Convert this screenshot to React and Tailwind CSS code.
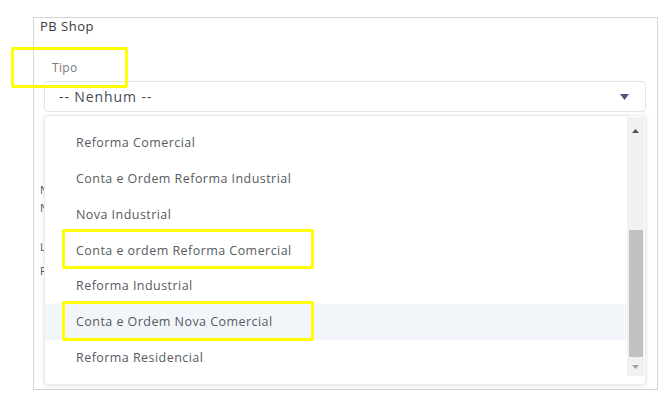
import React from "react";

const options = [
  "Reforma Comercial",
  "Conta e Ordem Reforma Industrial",
  "Nova Industrial",
  "Conta e ordem Reforma Comercial",
  "Reforma Industrial",
  "Conta e Ordem Nova Comercial",
  "Reforma Residencial",
];

const App = () => {
  const active = 5;

  return (
    <div className="relative h-[399px] w-[667px] bg-white pl-[33px] pt-[17px] font-['Open_Sans',sans-serif] overflow-hidden">
      {/* Panel */}
      <div className="relative w-[625px] h-[373px] border border-[#d4d4d4]">
        <div className="pl-[6px] text-[13px] leading-[16px] tracking-[0.5px] text-[#3b3b3b]">PB Shop</div>

        <div className="mt-[26px] pl-[18px] text-[12px] leading-[16px] tracking-[0.3px] text-[#7a7a7a]">Tipo</div>

        {/* Select */}
        <div className="mt-[5px] ml-[10px] w-[602px] h-[31px] border border-[#e3e3e3] rounded flex items-center justify-between pl-[14px] pr-[16px]">
          <span className="text-[14px] tracking-[0.9px] text-[#3f4a57]">-- Nenhum --</span>
          <svg width="9" height="6" viewBox="0 0 9 6">
            <path d="M0 0 L9 0 L4.5 6 Z" fill="#46597a" />
          </svg>
        </div>

        {/* Form fields behind the menu */}
        <div className="pl-[6px] text-[11px] leading-[14px] text-[#555]">
          <div className="mt-[71px]">Nome</div>
          <div className="mt-[4px]">Nova</div>
          <div className="mt-[25px]">Loja</div>
          <div className="mt-[10px]">Filial</div>
        </div>

        {/* Dropdown menu */}
        <div className="absolute left-[10px] top-[97px] w-[602px] h-[270px] bg-white rounded border border-[#ececec] shadow-[0_1px_4px_rgba(0,0,0,0.12)] flex pt-[1px] pb-[8px]">
          <div className="flex-1 pt-[9px]">
            {options.map((o, i) => (
              <div
                key={o}
                className={`h-[35.7px] flex items-center pl-[31px] text-[12.5px] tracking-[0.45px] text-[#565b61] ${i === active ? "bg-[#f2f5fa]" : ""}`}
              >
                {o}
              </div>
            ))}
          </div>
          {/* Scrollbar */}
          <div className="w-[17px] mr-[1px] h-full bg-[#f1f1f1] flex flex-col items-center">
            <div className="h-[28px] flex items-center justify-center">
              <svg width="7" height="4" viewBox="0 0 7 4">
                <path d="M0 4 L7 4 L3.5 0 Z" fill="#505050" />
              </svg>
            </div>
            <div className="mt-[85px] w-[14px] h-[127px] bg-[#c1c1c1]" />
            <div className="flex-1 flex items-center justify-center">
              <svg width="7" height="4" viewBox="0 0 7 4">
                <path d="M0 0 L7 0 L3.5 4 Z" fill="#a3a3a3" />
              </svg>
            </div>
          </div>
        </div>
      </div>

      {/* Yellow annotation boxes */}
      <div className="absolute left-[11px] top-[47px] w-[117px] h-[41px] border-[3px] border-[#ffff00] rounded-[2px]" />
      <div className="absolute left-[62px] top-[229px] w-[252px] h-[40px] border-[3px] border-[#ffff00] rounded-[2px]" />
      <div className="absolute left-[62px] top-[301px] w-[252px] h-[40px] border-[3px] border-[#ffff00] rounded-[2px]" />
    </div>
  );
};

export default App;
